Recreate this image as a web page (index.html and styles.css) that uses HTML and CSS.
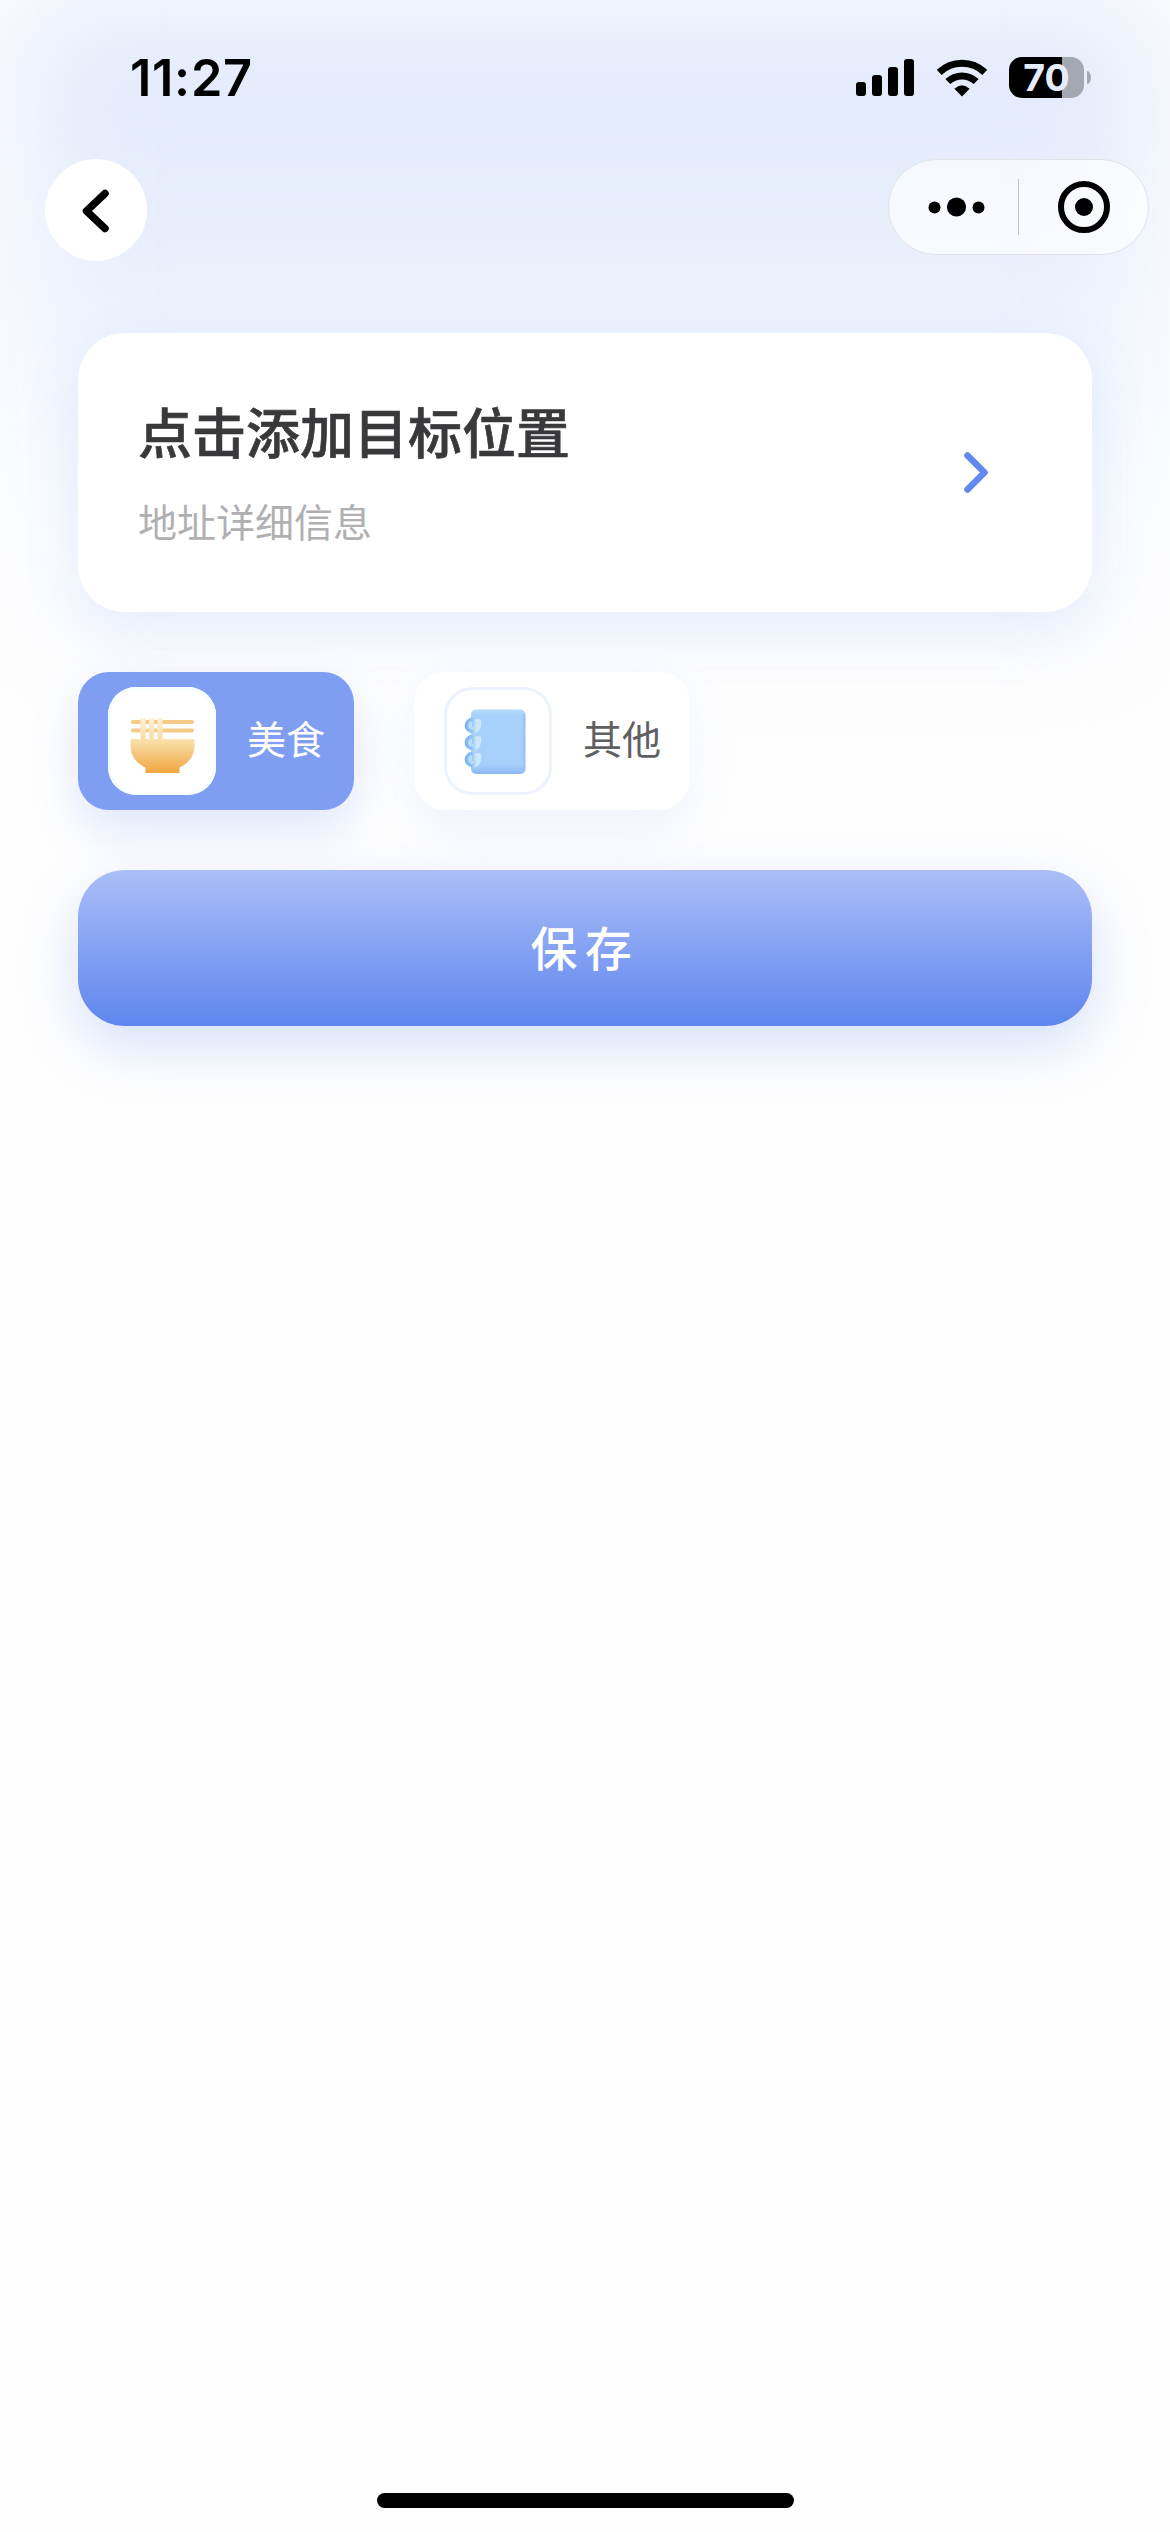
FILE: index.html
```html
<!DOCTYPE html>
<html lang="zh-CN">
<head>
    <meta charset="UTF-8">
    <meta name="viewport" content="width=device-width, initial-scale=1.0">
    <title>添加目标位置</title>
    <link rel="stylesheet" href="styles.css">
</head>
<body>
    <div class="page">
        <header class="status-bar">
            <span class="time">11:27</span>
            <div class="status-icons">
                <svg class="signal" width="58" height="38" viewBox="0 0 58 38">
                    <rect x="0" y="23" width="10" height="14" rx="3"/>
                    <rect x="16" y="16" width="10" height="21" rx="3"/>
                    <rect x="32" y="8" width="10" height="29" rx="3"/>
                    <rect x="48" y="0" width="10" height="37" rx="3"/>
                </svg>
                <svg class="wifi" width="52" height="38" viewBox="0 0 52 38">
                    <path d="M3.2 13.4A33 33 0 0 1 48.8 13.4" fill="none" stroke="#000" stroke-width="7"/>
                    <path d="M11.8 22.6A20.5 20.5 0 0 1 40.2 22.6" fill="none" stroke="#000" stroke-width="7"/>
                    <path d="M26 37.4L18.4 29.8Q26 22.6 33.6 29.8Z"/>
                </svg>
                <div class="battery">
                    <span class="battery-body">70</span>
                    <span class="battery-tip"></span>
                </div>
            </div>
        </header>

        <nav class="nav-bar">
            <button class="back-btn" aria-label="返回">
                <svg width="102" height="102" viewBox="0 0 102 102">
                    <path d="M60 34.5L41.5 52L60 69.5" fill="none" stroke="#000" stroke-width="7.5" stroke-linecap="round" stroke-linejoin="round"/>
                </svg>
            </button>
            <div class="capsule">
                <svg width="129" height="94" viewBox="0 0 129 94">
                    <circle cx="45.5" cy="47.5" r="6"/>
                    <circle cx="67.5" cy="47" r="9.6"/>
                    <circle cx="89.5" cy="47.5" r="6"/>
                </svg>
                <span class="divider"></span>
                <svg width="129" height="94" viewBox="0 0 129 94">
                    <circle cx="65" cy="47" r="23" fill="none" stroke="#000" stroke-width="6"/>
                    <circle cx="65" cy="47" r="9"/>
                </svg>
            </div>
        </nav>

        <main class="content">
            <section class="address-card">
                <div class="address-text">
                    <h1>点击添加目标位置</h1>
                    <p>地址详细信息</p>
                </div>
                <svg class="arrow" width="26" height="42" viewBox="0 0 26 42">
                    <path d="M4.5 3.5L21.5 20.5L4.5 37.5" fill="none" stroke="#6189f0" stroke-width="6.6" stroke-linecap="round" stroke-linejoin="round"/>
                </svg>
            </section>

            <div class="tags">
                <div class="tag active">
                    <span class="tag-icon">
                        <svg width="108" height="108" viewBox="0 0 108 108">
                            <defs>
                                <linearGradient id="bowl" x1="0" y1="0" x2="0" y2="1">
                                    <stop offset="0" stop-color="#f9e2ad"/>
                                    <stop offset="1" stop-color="#f0a440"/>
                                </linearGradient>
                                <linearGradient id="noodle" gradientUnits="userSpaceOnUse" x1="0" y1="30" x2="0" y2="52">
                                    <stop offset="0" stop-color="#fdf3df"/>
                                    <stop offset="1" stop-color="#f8dba4"/>
                                </linearGradient>
                            </defs>
                            <path d="M25 35H84M25 43.5H84" stroke="#f5ca86" stroke-width="4" stroke-linecap="round"/>
                            <path d="M35 31V51M43.5 31V51M52 31V51" stroke="#fbe7c3" stroke-width="5.5"/>
                            <path d="M35 31V52M43.5 31V52M52 31V52" stroke="url(#noodle)" stroke-width="4"/>
                            <path d="M24 52H85Q86.5 52 86.5 54V58C86.5 69 81 76 71.5 80.5V86H37.5V80.5C28 76 22.5 69 22.5 58V54Q22.5 52 24 52Z" fill="url(#bowl)"/>
                        </svg>
                    </span>
                    <span class="tag-name">美食</span>
                </div>
                <div class="tag">
                    <span class="tag-icon">
                        <svg width="108" height="108" viewBox="0 0 108 108">
                            <defs>
                                <linearGradient id="book" x1="0" y1="0" x2="0" y2="1">
                                    <stop offset="0" stop-color="#b4dbf8"/>
                                    <stop offset="0.08" stop-color="#a6d2fb"/>
                                    <stop offset="0.86" stop-color="#a6d0fa"/>
                                    <stop offset="1" stop-color="#8cb7f4"/>
                                </linearGradient>
                                <linearGradient id="ring" gradientUnits="userSpaceOnUse" x1="21" y1="0" x2="37" y2="0">
                                    <stop offset="0" stop-color="#7ab4f1"/>
                                    <stop offset="0.45" stop-color="#8fc3f5"/>
                                    <stop offset="0.7" stop-color="#cfe7fd"/>
                                </linearGradient>
                            </defs>
                            <rect x="27" y="22.5" width="54.5" height="64.5" rx="5" fill="url(#book)"/>
                            <path d="M80 27V83" stroke="#95bff5" stroke-width="2.5" opacity=".7"/>
                            <g fill="#b9dcfc">
                                <circle cx="29" cy="38.5" r="6"/>
                                <circle cx="29" cy="55.5" r="6"/>
                                <circle cx="29" cy="72.5" r="6"/>
                            </g>
                            <g fill="none" stroke="url(#ring)" stroke-width="3.4" stroke-linecap="round">
                                <path d="M28 32.5C20.5 33 20.5 44 28 44.5C33.5 45 36 41 35.5 34M35.5 34H30V38.5H33"/>
                                <path d="M28 49.5C20.5 50 20.5 61 28 61.5C33.5 62 36 58 35.5 51M35.5 51H30V55.5H33"/>
                                <path d="M28 66.5C20.5 67 20.5 78 28 78.5C33.5 79 36 75 35.5 68M35.5 68H30V72.5H33"/>
                            </g>
                        </svg>
                    </span>
                    <span class="tag-name">其他</span>
                </div>
            </div>

            <button class="save-btn">保存</button>
        </main>

        <div class="home-indicator"></div>
    </div>
</body>
</html>
```
FILE: styles.css
```css
* {
    box-sizing: border-box;
}
body {
    margin: 0;
    background-color: #fefefe;
    font-family: "Noto Sans CJK SC", sans-serif;
}
svg {
    display: block;
}
button {
    border: none;
    padding: 0;
    font-family: inherit;
}
.page {
    position: relative;
    display: flex;
    flex-direction: column;
    height: 2532px;
    overflow: hidden;
    isolation: isolate;
}
/* soft blue glow behind the header */
.page::before {
    content: "";
    position: absolute;
    z-index: -1;
    top: 0;
    left: 18px;
    right: 18px;
    height: 720px;
    background: linear-gradient(#e1e8fb 0, #e5ecfb 170px, #edf2fd 340px, #f7f9ff 500px, rgba(254, 254, 254, 0) 100%);
    filter: blur(58px);
}

/* status bar */
.status-bar {
    display: flex;
    justify-content: space-between;
    align-items: flex-start;
    height: 159px;
    padding: 57px 79px 0 130px;
}
.time {
    font-family: Inter, sans-serif;
    font-size: 50.5px;
    font-weight: 600;
    line-height: 42px;
    letter-spacing: 0.7px;
}
.status-icons {
    display: flex;
    align-items: flex-start;
}
.signal {
    margin: 2px 22px 0 0;
}
.wifi {
    margin: 2px 21px 0 0;
}
.battery {
    display: flex;
    align-items: center;
    gap: 3px;
}
.battery-body {
    width: 75px;
    height: 41px;
    border-radius: 13px;
    background: linear-gradient(to right, #000 53px, #a4a8b3 53px);
    color: #e6ecfb;
    font-family: Inter, sans-serif;
    font-size: 37.5px;
    font-weight: 700;
    line-height: 41px;
    text-align: center;
}
.battery-tip {
    width: 4px;
    height: 13px;
    border-radius: 0 4px 4px 0 / 0 7px 7px 0;
    background-color: #a4a8b3;
}

/* nav bar */
.nav-bar {
    display: flex;
    justify-content: space-between;
    align-items: flex-start;
    height: 174px;
    padding: 0 21px 0 45px;
}
.back-btn {
    width: 102px;
    height: 102px;
    border-radius: 50%;
    background-color: #fff;
}
.capsule {
    display: flex;
    align-items: center;
    width: 261px;
    height: 96px;
    border: 1px solid #e1e3e9;
    border-radius: 48px;
    background-color: rgba(255, 255, 255, 0.65);
}
.divider {
    width: 1px;
    height: 56px;
    background-color: #c2c4ca;
}

/* content */
.content {
    display: flex;
    flex-direction: column;
    gap: 60px;
    padding: 0 78px;
}
.address-card {
    display: flex;
    justify-content: space-between;
    align-items: center;
    height: 279px;
    padding: 0 103px 0 60px;
    border-radius: 47px;
    background-color: #fff;
    box-shadow: 0 20px 56px rgba(97, 137, 240, 0.13);
}
.address-text {
    padding-bottom: 5px;
}
.address-text h1 {
    margin: 0 0 21px;
    color: #39393b;
    font-size: 54px;
    font-weight: 500;
    line-height: 78px;
    -webkit-text-stroke: 0.7px #39393b;
}
.address-text p {
    margin: 0;
    color: #b0b0b2;
    font-size: 39px;
    line-height: 58px;
}
.tags {
    display: flex;
    gap: 60px;
}
.tag {
    display: flex;
    align-items: center;
    width: 276px;
    height: 138px;
    padding-left: 30px;
    gap: 31px;
    border-radius: 31px;
    background-color: #fff;
    color: #606062;
    box-shadow: 0 20px 47px rgba(97, 137, 240, 0.1);
}
.tag.active {
    background-color: #7f9ef1;
    color: #fff;
    box-shadow: 0 20px 47px rgba(97, 137, 240, 0.2);
}
.tag-icon {
    width: 108px;
    height: 108px;
    border-radius: 28px;
    background-color: #fff;
    box-shadow: inset 0 0 0 3px #ecf2fe;
}
.tag-icon svg {
    filter: blur(0.7px);
}
.tag.active .tag-icon {
    box-shadow: inset 0 0 0 3px #f5fdff;
}
.tag-name {
    padding-bottom: 8px;
    font-size: 39px;
    line-height: 58px;
}
.save-btn {
    height: 156px;
    padding-bottom: 6px;
    border-radius: 47px;
    background: linear-gradient(#abbef7, #5f86ee);
    box-shadow: 0 20px 56px rgba(97, 137, 240, 0.25);
    color: #fff;
    font-size: 46.8px;
    font-weight: 500;
    letter-spacing: 7.8px;
}

.home-indicator {
    width: 417px;
    height: 15px;
    margin: auto auto 24px;
    border-radius: 8px;
    background-color: #000;
}
```
